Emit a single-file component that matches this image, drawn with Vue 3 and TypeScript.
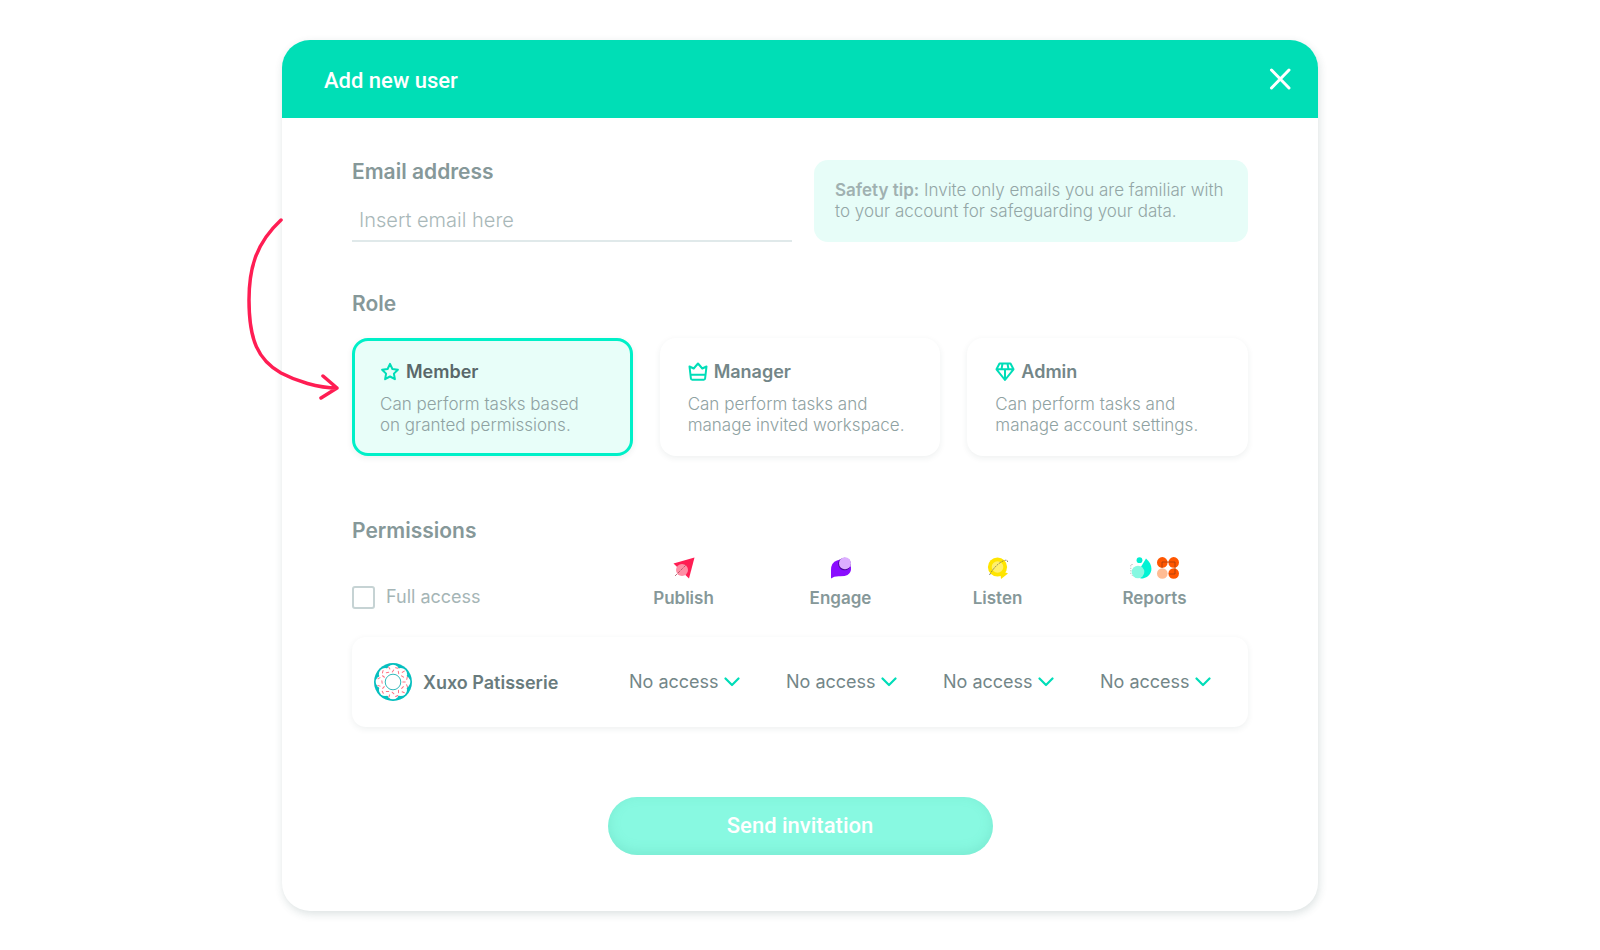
<script setup lang="ts">
import { ref } from 'vue'

type Role = { id: string; name: string; lines: [string, string] }
type Product = { id: string; name: string }

const roles: Role[] = [
  { id: 'member', name: 'Member', lines: ['Can perform tasks based', 'on granted permissions.'] },
  { id: 'manager', name: 'Manager', lines: ['Can perform tasks and', 'manage invited workspace.'] },
  { id: 'admin', name: 'Admin', lines: ['Can perform tasks and', 'manage account settings.'] },
]

const products: Product[] = [
  { id: 'publish', name: 'Publish' },
  { id: 'engage', name: 'Engage' },
  { id: 'listen', name: 'Listen' },
  { id: 'reports', name: 'Reports' },
]

const email = ref('')
const role = ref('member')
const fullAccess = ref(false)
const access = ref<Record<string, string>>({
  publish: 'none',
  engage: 'none',
  listen: 'none',
  reports: 'none',
})

const lobes = Array.from({ length: 8 }, (_, i) => {
  const a = (i * Math.PI) / 4 + Math.PI / 2
  return { x: 20 + 11 * Math.cos(a), y: 20 + 11 * Math.sin(a) }
})

const sprinkles = Array.from({ length: 24 }, (_, i) => {
  const a = (i * 2 * Math.PI) / 24
  const r = i % 2 ? 14.5 : 11
  return { x: 20 + r * Math.cos(a), y: 20 + r * Math.sin(a), turn: (i * 67) % 180 }
})
</script>

<template>
  <main class="page">
    <form class="dialog" role="dialog" aria-labelledby="dialog-title" @submit.prevent>
      <header class="dialog-head">
        <h1 id="dialog-title">Add new user</h1>
        <button type="button" class="close" aria-label="Close">
          <svg viewBox="0 0 22 24" width="22" height="24">
            <path d="M2.500 3 20 21M20 3 2.500 21" fill="none" stroke="#fff" stroke-width="3" stroke-linecap="round" />
          </svg>
        </button>
      </header>

      <div class="body">
        <section class="email-row">
          <div class="field">
            <label class="heading" for="email">Email address</label>
            <input id="email" v-model="email" type="email" placeholder="Insert email here" />
          </div>
          <p class="tip"><strong>Safety tip:</strong> Invite only emails you are familiar with<br />to your account for safeguarding your data.</p>
        </section>

        <fieldset class="roles">
          <legend class="heading">Role</legend>
          <div class="role-grid">
            <label v-for="r in roles" :key="r.id" class="role" :class="{ selected: role === r.id }">
              <input v-model="role" type="radio" name="role" :value="r.id" />
              <span class="role-name">
                <svg v-if="r.id === 'member'" viewBox="0 0 20 20" width="20" height="20">
                  <path d="M10 1.9 12.4 7l5.5.7-4 3.9 1 5.6-4.9-2.7-4.9 2.7 1-5.6-4-3.9L7.600 7Z" />
                </svg>
                <svg v-else-if="r.id === 'manager'" viewBox="0 0 20 20" width="20" height="20">
                  <path d="M1.500 4.500 5.700 6.500 10 1.500l4.300 5 4.200-2-1.400 12q-.1 1.200-1.300 1.200H4.200q-1.200 0-1.300-1.200ZM2.500 12.800h15" />
                </svg>
                <svg v-else viewBox="0 0 20 20" width="20" height="20">
                  <path d="M4.500 1.500h11l3 5.800L10 18 1.500 7.300ZM1.500 7.300h17M7.500 1.500 6.500 7.300M12.500 1.500l1 5.800M10 7.500v10" />
                </svg>
                {{ r.name }}
              </span>
              <span class="role-text">{{ r.lines[0] }}<br />{{ r.lines[1] }}</span>
            </label>
          </div>
        </fieldset>

        <section class="permissions">
          <h2 class="heading">Permissions</h2>
          <table>
            <thead>
              <tr>
                <td>
                  <label class="full">
                    <input v-model="fullAccess" type="checkbox" />
                    Full access
                  </label>
                </td>
                <th v-for="p in products" :key="p.id" scope="col">
                  <span class="marks">
                    <svg v-if="p.id === 'publish'" viewBox="0 0 22 22" width="22" height="22">
                      <path d="M.5 6.500 21.500.5 16 21.500Z" fill="#ff1d53" />
                      <circle cx="9" cy="13" r="6" fill="#ff8ea5" />
                      <path d="M2 19 13 8" stroke="#a5525f" stroke-width=".8" stroke-dasharray="3 1" />
                    </svg>
                    <svg v-else-if="p.id === 'engage'" viewBox="0 0 22 22" width="22" height="22">
                      <path d="M1 21.500V13Q1 5.500 7 3.500q4-1.500 8-.5l6 7q.5 5.500-3.500 8-2.500 1.500-8.500 1.300-5-.1-8 2.200Z" fill="#8a0dff" />
                      <circle cx="14.500" cy="7" r="6.300" fill="#4d0b9b" />
                      <circle cx="15" cy="6.200" r="6" fill="#dcaeff" />
                    </svg>
                    <svg v-else-if="p.id === 'listen'" viewBox="0 0 22 22" width="22" height="22">
                      <circle cx="10.500" cy="10" r="9.600" fill="#ffe500" />
                      <path d="m13 13 8 3.500-7 5.500Z" fill="#ffe500" />
                      <circle cx="10.500" cy="10" r="5.800" fill="#fff06b" />
                      <path d="M2.500 18Q8 8 16 4q5-2 4.500 1" fill="none" stroke="#666" stroke-width=".8" stroke-dasharray="2 1" />
                    </svg>
                    <template v-else>
                      <svg viewBox="0 0 22 22" width="22" height="22">
                        <circle cx="9.500" cy="3.200" r="2.900" fill="#00eed0" />
                        <path d="M16 1.500C26 10 21 21.500 10.500 21.500L8.500 14Z" fill="#00f3d4" />
                        <circle cx="8" cy="15" r="6.300" fill="#86f8e1" />
                        <path d="M2.500 7.500H.8V17l2 2" fill="none" stroke="#999" stroke-width=".8" stroke-dasharray="1 1.500" />
                      </svg>
                      <svg viewBox="0 0 22 22" width="22" height="22">
                        <g fill="#ff5600">
                          <circle cx="5.300" cy="5.400" r="5.300" />
                          <circle cx="16.700" cy="5.400" r="5.300" />
                          <circle cx="16.700" cy="16.500" r="5.300" />
                        </g>
                        <circle cx="5.300" cy="16.500" r="5.300" fill="#ffbc94" />
                        <path d="M5 11V5h13v12h-6" fill="none" stroke="#a33c0c" stroke-width=".8" />
                      </svg>
                    </template>
                  </span>
                  {{ p.name }}
                </th>
              </tr>
            </thead>
            <tbody>
              <tr>
                <th scope="row">
                  <svg class="donut" viewBox="0 0 40 40" width="40" height="40">
                    <circle cx="20" cy="20" r="19" fill="#05bfbf" />
                    <circle cx="20" cy="20" r="14.500" fill="#fff" />
                    <circle v-for="(l, i) in lobes" :key="'l' + i" :cx="l.x" :cy="l.y" r="6.300" fill="#fff" />
                    <path
                      v-for="(s, i) in sprinkles"
                      :key="'s' + i"
                      d="M-1.200 0h2.400"
                      stroke="#ff7183"
                      stroke-width="1"
                      stroke-linecap="round"
                      :transform="`translate(${s.x} ${s.y}) rotate(${s.turn})`"
                    />
                    <circle cx="20" cy="20" r="7.800" fill="#fff" stroke="#32b9bb" stroke-width="1" />
                  </svg>
                  Xuxo Patisserie
                </th>
                <td v-for="p in products" :key="p.id">
                  <span class="picker">
                    <select v-model="access[p.id]" :aria-label="p.name">
                      <option value="none">No access</option>
                    </select>
                    <svg viewBox="0 0 16 10" width="16" height="10">
                      <path d="m1.500 1.500 6.500 6.500 6.500-6.500" fill="none" stroke="#00ddb8" stroke-width="2.200" stroke-linecap="round" stroke-linejoin="round" />
                    </svg>
                  </span>
                </td>
              </tr>
            </tbody>
          </table>
        </section>

        <button type="submit" class="send">Send invitation</button>
      </div>

      <svg class="pointer" viewBox="0 0 96 188" width="96" height="188" aria-hidden="true">
        <path d="M37 4C11 28 5 54 5 84c0 40 9 60 32 73 15 8 37 15 56 15M79 160l14 12-16 10" fill="none" stroke="#ff1d53" stroke-width="3.500" stroke-linecap="round" stroke-linejoin="round" />
      </svg>
    </form>
  </main>
</template>

<style>
body {
  margin: 0;
  background: #fff;
}
</style>

<style scoped>
* {
  box-sizing: border-box;
}

.page {
  padding: 40px 56px;
  font-family: Inter, "Liberation Sans", sans-serif;
  color: #869899;
}

.dialog {
  position: relative;
  max-width: 1036px;
  margin: 0 auto;
  border-radius: 28px;
  background: #fff;
  box-shadow: 1px 3px 9px rgba(40, 75, 75, 0.16);
}

.dialog-head {
  display: flex;
  align-items: center;
  justify-content: space-between;
  height: 78px;
  padding: 0 27px 0 42px;
  border-radius: 28px 28px 0 0;
  background: #00deb6;
}

h1 {
  margin: 4px 0 0;
  font: 500 22px/28px Roboto, sans-serif;
  color: #fff;
}

button {
  border: 0;
  cursor: pointer;
}

.close {
  display: flex;
  padding: 0;
  background: none;
}

.body {
  padding: 42px 70px 56px;
}

.heading {
  display: block;
  margin: 0;
  padding: 0;
  font-size: 21px;
  font-weight: 600;
  line-height: 24px;
}

.email-row {
  display: grid;
  grid-template-columns: 440fr 434fr;
  gap: 22px;
}

.field input {
  width: 100%;
  height: 40px;
  margin-top: 18px;
  padding: 0 7px 2px;
  border: 0;
  border-bottom: 2px solid #e0e9ea;
  background: none;
  font: 300 20px/24px Inter, sans-serif;
  color: #869899;
  outline: 0;
}

.field input::placeholder {
  color: #a9b8b9;
  opacity: 1;
}

.tip {
  margin: 0;
  padding: 20px 16px 20px 21px;
  border-radius: 14px;
  background: #e7fdf8;
  font-size: 17px;
  font-weight: 300;
  line-height: 21px;
  color: #93a6a6;
}

.tip strong {
  font-weight: 600;
  color: #a0b1b1;
}

.roles {
  margin: 50px 0 0;
  padding: 0;
  border: 0;
}

.role-grid {
  display: grid;
  grid-template-columns: repeat(3, 1fr);
  gap: 27px;
  padding-top: 22px;
}

.role {
  position: relative;
  display: block;
  height: 118px;
  padding: 20px 25px;
  border: 3px solid transparent;
  border-radius: 16px;
  box-shadow: 0 2px 6px rgba(40, 60, 60, 0.08);
  cursor: pointer;
}

.role.selected {
  border-color: #00f0c8;
  background: #e8fef9;
}

.role input {
  position: absolute;
  opacity: 0;
}

.role-name {
  display: flex;
  align-items: center;
  gap: 6px;
  font-size: 18px;
  font-weight: 600;
  line-height: 22px;
  color: #738688;
}

.role-name path {
  fill: none;
  stroke: #00ddb8;
  stroke-width: 2;
  stroke-linejoin: round;
}

.selected .role-name {
  color: #59686a;
}

.role-text {
  display: block;
  margin-top: 11px;
  font-size: 17px;
  font-weight: 300;
  line-height: 21px;
  color: #8fa2a2;
  white-space: nowrap;
}

.permissions {
  margin-top: 63px;
}

table,
thead,
tbody {
  display: block;
}

tr {
  display: grid;
  grid-template-columns: 253fr repeat(4, 157fr);
  padding-right: 15px;
}

td,
th {
  padding: 0;
  text-align: left;
}

thead tr {
  padding-top: 14px;
  align-items: end;
}

thead th {
  font-size: 17px;
  font-weight: 600;
  line-height: 22px;
  text-align: center;
}

.marks {
  display: flex;
  justify-content: center;
  gap: 5px;
  height: 22px;
  margin-bottom: 8px;
}

.full {
  display: flex;
  align-items: center;
  gap: 11px;
  font-size: 18px;
  line-height: 24px;
  color: #a5b5b6;
}

.full input {
  appearance: none;
  width: 23px;
  height: 23px;
  margin: 0;
  border: 2px solid #c6d3d4;
  border-radius: 3px;
  background: #fff;
}

.full input:checked {
  background: #00deb6;
}

tbody tr {
  align-items: center;
  height: 90px;
  margin-top: 28px;
  border-radius: 14px;
  box-shadow: 0 2px 6px rgba(40, 60, 60, 0.08);
}

tbody th {
  display: flex;
  align-items: center;
  gap: 10px;
  padding-left: 21px;
  font-size: 18px;
  font-weight: 600;
  color: #697b7d;
}

tbody td {
  padding-left: 24px;
}

.picker {
  display: flex;
  align-items: center;
  gap: 5px;
}

select {
  appearance: none;
  padding: 0;
  border: 0;
  background: none;
  font: 400 18px/24px Inter, sans-serif;
  color: #738688;
}

.send {
  display: block;
  width: 385px;
  max-width: 100%;
  height: 58px;
  margin: 70px auto 0;
  border-radius: 29px;
  background: #88f9e1;
  box-shadow: inset 0 -3px 12px rgba(80, 190, 165, 0.25);
  font: 500 22px/24px Roboto, sans-serif;
  color: #fff;
}

.pointer {
  position: absolute;
  top: 176px;
  left: -38px;
  pointer-events: none;
}
</style>
